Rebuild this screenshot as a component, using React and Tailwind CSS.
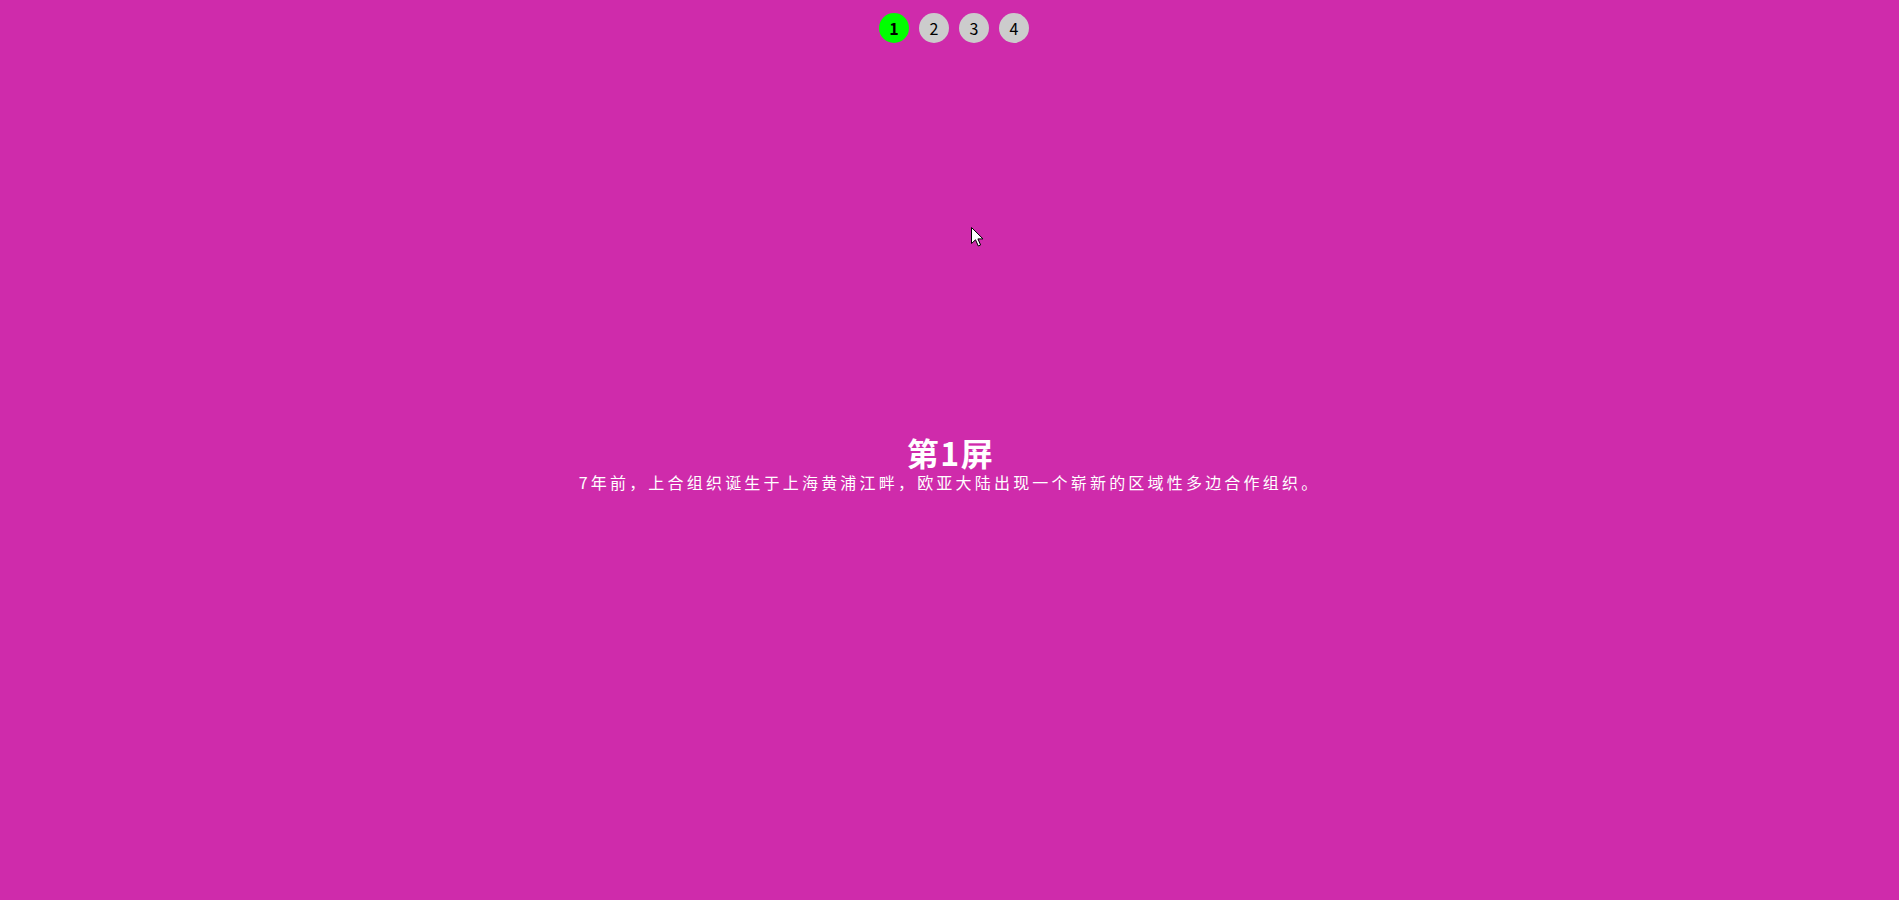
import { useState } from 'react'

const PAGES = [1, 2, 3, 4]

function Cursor() {
  // mouse pointer visible in the shot
  return (
    <svg
      className="absolute left-[971px] top-[227px]"
      width="13"
      height="20"
      viewBox="0 0 13 20"
    >
      <path
        d="M0.5 0.5 L0.5 16.5 L4.5 12.8 L7.3 19 L9.6 18 L6.9 11.9 L12 11.9 Z"
        fill="#fff"
        stroke="#000"
        strokeWidth="1"
        strokeLinejoin="round"
      />
    </svg>
  )
}

export default function App() {
  const [active, setActive] = useState(1)

  return (
    <div
      className="relative h-[900px] w-full overflow-hidden bg-[#cf2bab] text-white"
      style={{ fontFamily: '"Noto Sans CJK SC", "Noto Sans", sans-serif' }}
    >
      {/* Page dots */}
      <nav className="absolute inset-x-0 top-[13px] flex justify-center gap-[10px] pl-[9px]">
        {PAGES.map((n) => (
          <button
            key={n}
            onClick={() => setActive(n)}
            className={`flex h-[30px] w-[30px] items-center justify-center rounded-full text-[16px] leading-none text-black ${
              active === n ? 'bg-[#00ff00] font-bold' : 'bg-[#cccccc] text-[#222]'
            }`}
          >
            {n}
          </button>
        ))}
      </nav>

      {/* Screen content */}
      <section className="flex h-full flex-col items-center justify-center pt-[28px]">
        <h1 className="pl-[2px] text-[32px] font-bold leading-[36px] tracking-[1.5px]">第{active}屏</h1>
        <p className="text-[16px] leading-[24px] tracking-[3.2px]">
          7年前，上合组织诞生于上海黄浦江畔，欧亚大陆出现一个崭新的区域性多边合作组织。
        </p>
      </section>

      <Cursor />
    </div>
  )
}
